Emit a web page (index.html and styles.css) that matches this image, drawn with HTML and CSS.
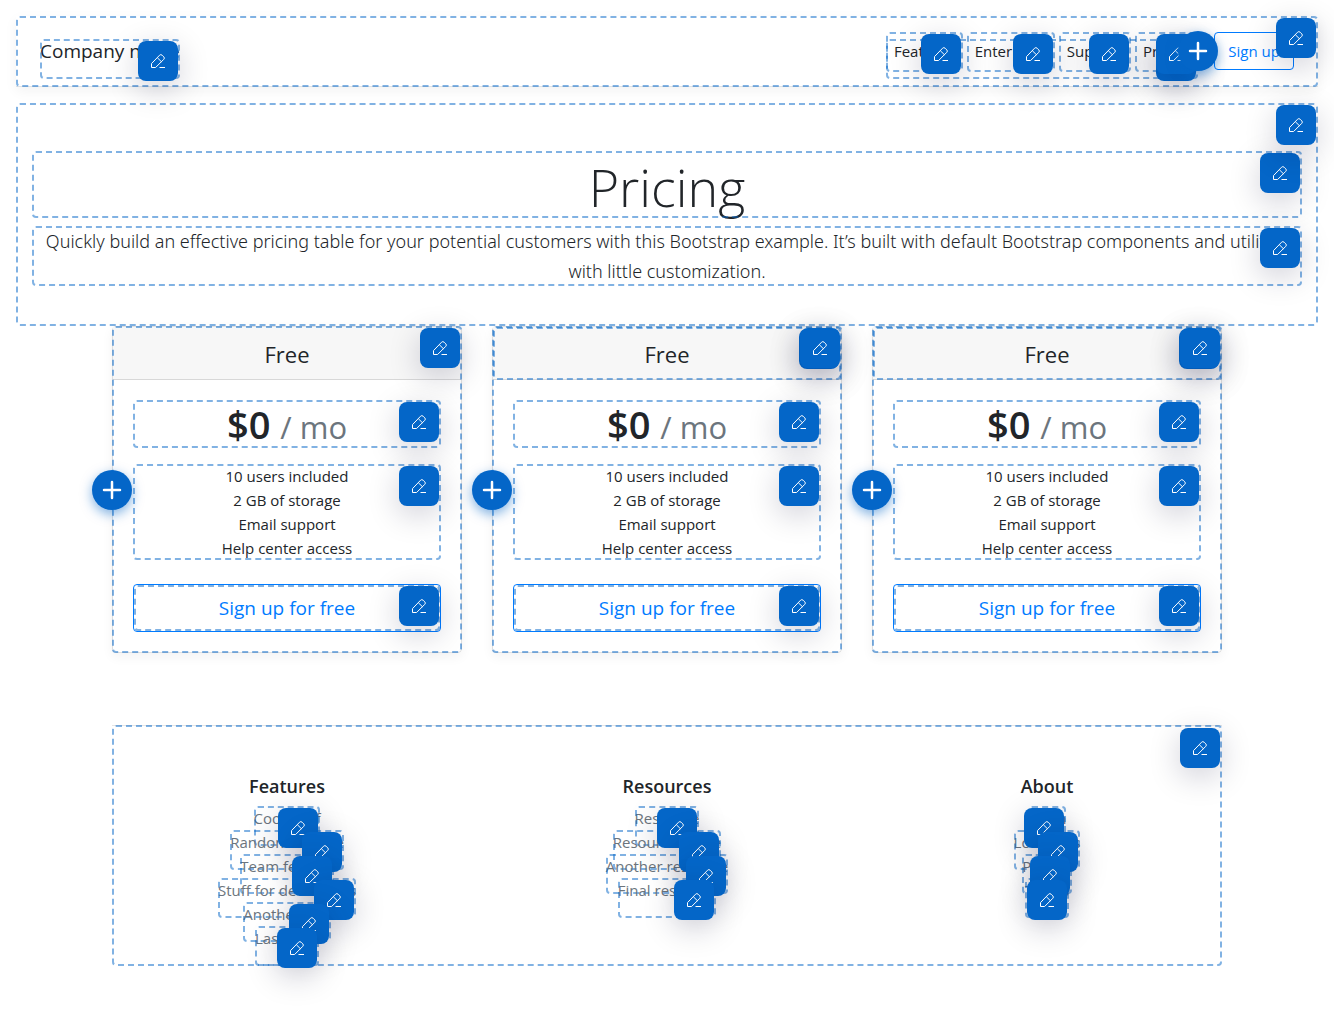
FILE: index.html
```html
<!DOCTYPE html>
<html lang="en">
<head>
<meta charset="utf-8">
<meta name="viewport" content="width=device-width, initial-scale=1">
<title>Pricing</title>
<link rel="stylesheet" href="styles.css">
</head>
<body>
<svg class="sprite" aria-hidden="true">
  <symbol id="edit" viewBox="0 0 16 16">
    <path d="M1.5 14.5V10.6L9.6 2.2Q10.8 1 12.1 2.2L13.8 3.9Q15 5.1 13.8 6.3L5.6 14.5ZM7.3 4.7L11.5 8.8M9.5 14.5H15"/>
  </symbol>
  <symbol id="plus" viewBox="0 0 20 20">
    <path d="M10 2V18M2 10H18"/>
  </symbol>
</svg>

<header class="topbar editable">
  <h5 class="brand editable">Company name<button class="edit" aria-label="Edit company name"><svg><use href="#edit"/></svg></button></h5>
  <nav class="nav editable">
    <span class="nav-item editable"><a href="#">Features</a><button class="edit" aria-label="Edit link"><svg><use href="#edit"/></svg></button></span>
    <span class="nav-item editable"><a href="#">Enterprise</a><button class="edit" aria-label="Edit link"><svg><use href="#edit"/></svg></button></span>
    <span class="nav-item editable"><a href="#">Support</a><button class="edit" aria-label="Edit link"><svg><use href="#edit"/></svg></button></span>
    <span class="nav-item editable"><a href="#">Pricing</a><button class="edit" aria-label="Edit link"><svg><use href="#edit"/></svg></button></span>
    <button class="edit edit-under" aria-label="Edit navigation"><svg><use href="#edit"/></svg></button>
    <button class="add add-end" aria-label="Add link"><svg><use href="#plus"/></svg></button>
  </nav>
  <a class="btn" href="#">Sign up</a>
  <button class="edit" aria-label="Edit header"><svg><use href="#edit"/></svg></button>
</header>

<section class="hero editable">
  <h1 class="editable">Pricing<button class="edit" aria-label="Edit title"><svg><use href="#edit"/></svg></button></h1>
  <p class="lead editable">Quickly build an effective pricing table for your potential customers with this Bootstrap example. It’s built with default Bootstrap components and utilities<br> with little customization.<button class="edit" aria-label="Edit text"><svg><use href="#edit"/></svg></button></p>
  <button class="edit" aria-label="Edit section"><svg><use href="#edit"/></svg></button>
</section>

<main class="container">
  <div class="cards">
    <article class="card">
      <div class="card-header"><h4>Free</h4></div>
      <div class="card-body">
        <h2 class="price editable">$0 <small>/ mo</small><button class="edit" aria-label="Edit price"><svg><use href="#edit"/></svg></button></h2>
        <div class="perks editable">
          <ul><li>10 users included</li><li>2 GB of storage</li><li>Email support</li><li>Help center access</li></ul>
          <button class="edit" aria-label="Edit list"><svg><use href="#edit"/></svg></button>
        </div>
        <div class="action"><button class="btn btn-lg">Sign up for free</button><button class="edit" aria-label="Edit button"><svg><use href="#edit"/></svg></button></div>
      </div>
      <div class="card-tools editable"><button class="edit" aria-label="Edit card"><svg><use href="#edit"/></svg></button><button class="add add-start" aria-label="Add card"><svg><use href="#plus"/></svg></button></div>
    </article>
    <article class="card">
      <div class="card-header editable"><h4>Free</h4><button class="edit" aria-label="Edit card title"><svg><use href="#edit"/></svg></button></div>
      <div class="card-body">
        <h2 class="price editable">$0 <small>/ mo</small><button class="edit" aria-label="Edit price"><svg><use href="#edit"/></svg></button></h2>
        <div class="perks editable">
          <ul><li>10 users included</li><li>2 GB of storage</li><li>Email support</li><li>Help center access</li></ul>
          <button class="edit" aria-label="Edit list"><svg><use href="#edit"/></svg></button>
        </div>
        <div class="action"><button class="btn btn-lg">Sign up for free</button><button class="edit" aria-label="Edit button"><svg><use href="#edit"/></svg></button></div>
      </div>
      <div class="card-tools editable"><button class="edit" aria-label="Edit card"><svg><use href="#edit"/></svg></button><button class="add add-start" aria-label="Add card"><svg><use href="#plus"/></svg></button></div>
    </article>
    <article class="card">
      <div class="card-header editable"><h4>Free</h4><button class="edit" aria-label="Edit card title"><svg><use href="#edit"/></svg></button></div>
      <div class="card-body">
        <h2 class="price editable">$0 <small>/ mo</small><button class="edit" aria-label="Edit price"><svg><use href="#edit"/></svg></button></h2>
        <div class="perks editable">
          <ul><li>10 users included</li><li>2 GB of storage</li><li>Email support</li><li>Help center access</li></ul>
          <button class="edit" aria-label="Edit list"><svg><use href="#edit"/></svg></button>
        </div>
        <div class="action"><button class="btn btn-lg">Sign up for free</button><button class="edit" aria-label="Edit button"><svg><use href="#edit"/></svg></button></div>
      </div>
      <div class="card-tools editable"><button class="edit" aria-label="Edit card"><svg><use href="#edit"/></svg></button><button class="add add-start" aria-label="Add card"><svg><use href="#plus"/></svg></button></div>
    </article>
  </div>

  <footer class="footer editable">
    <div>
      <h5>Features</h5>
      <ul class="links">
        <li class="editable"><a href="#">Cool stuff</a><button class="edit" aria-label="Edit link"><svg><use href="#edit"/></svg></button></li>
        <li class="editable"><a href="#">Random feature</a><button class="edit" aria-label="Edit link"><svg><use href="#edit"/></svg></button></li>
        <li class="editable"><a href="#">Team feature</a><button class="edit" aria-label="Edit link"><svg><use href="#edit"/></svg></button></li>
        <li class="editable"><a href="#">Stuff for developers</a><button class="edit" aria-label="Edit link"><svg><use href="#edit"/></svg></button></li>
        <li class="editable"><a href="#">Another one</a><button class="edit" aria-label="Edit link"><svg><use href="#edit"/></svg></button></li>
        <li class="editable"><a href="#">Last time</a><button class="edit" aria-label="Edit link"><svg><use href="#edit"/></svg></button></li>
      </ul>
    </div>
    <div>
      <h5>Resources</h5>
      <ul class="links">
        <li class="editable"><a href="#">Resource</a><button class="edit" aria-label="Edit link"><svg><use href="#edit"/></svg></button></li>
        <li class="editable"><a href="#">Resource name</a><button class="edit" aria-label="Edit link"><svg><use href="#edit"/></svg></button></li>
        <li class="editable"><a href="#">Another resource</a><button class="edit" aria-label="Edit link"><svg><use href="#edit"/></svg></button></li>
        <li class="editable"><a href="#">Final resource</a><button class="edit" aria-label="Edit link"><svg><use href="#edit"/></svg></button></li>
      </ul>
    </div>
    <div>
      <h5>About</h5>
      <ul class="links">
        <li class="editable"><a href="#">Team</a><button class="edit" aria-label="Edit link"><svg><use href="#edit"/></svg></button></li>
        <li class="editable"><a href="#">Locations</a><button class="edit" aria-label="Edit link"><svg><use href="#edit"/></svg></button></li>
        <li class="editable"><a href="#">Privacy</a><button class="edit" aria-label="Edit link"><svg><use href="#edit"/></svg></button></li>
        <li class="editable"><a href="#">Terms</a><button class="edit" aria-label="Edit link"><svg><use href="#edit"/></svg></button></li>
      </ul>
    </div>
    <button class="edit" aria-label="Edit footer"><svg><use href="#edit"/></svg></button>
  </footer>
</main>
</body>
</html>
```
FILE: styles.css
```css
*, *::before, *::after { box-sizing: border-box; }

body {
  margin: 0;
  padding: 16px 16px 64px;
  font: 400 15px/24px "Open Sans", "Noto Sans", sans-serif;
  color: #212529;
  background: #fff;
}

h1, h2, h4, h5, p, ul { margin: 0; padding: 0; font-weight: 400; }
ul { list-style: none; }
a { text-decoration: none; color: inherit; }
button { font: inherit; cursor: pointer; }
.sprite { position: absolute; width: 0; height: 0; }

/* Editing overlay: dashed frame, edit button, add button */
.editable { position: relative; }
.editable::after, .action::after {
  content: "";
  position: absolute;
  top: 0;
  left: 0;
  width: 100%;
  height: 100%;
  min-height: 40px;
  border: 2px dashed rgba(4, 102, 200, .5);
  border-radius: 4px;
  pointer-events: none;
}

.edit, .add {
  position: absolute;
  z-index: 2;
  display: flex;
  align-items: center;
  justify-content: center;
  width: 40px;
  height: 40px;
  padding: 0;
  border: 0;
  background: #0466c8;
}
.edit {
  top: 2px;
  right: 2px;
  border-radius: 8px;
  box-shadow: 0 8px 32px rgba(0, 0, 50, .2);
}
.edit svg, .add svg { fill: none; stroke: #fff; }
.edit svg { width: 16px; height: 16px; }
.edit-under { z-index: 1; }
.add {
  z-index: 3;
  border-radius: 50%;
  box-shadow: 0 4px 12px rgba(4, 102, 200, .5);
}
.add svg { width: 20px; height: 20px; stroke-width: 2.5; stroke-linecap: round; }
.add-end { top: -8px; right: -20px; }
.add-start { top: 50%; left: -20px; margin-top: -20px; }

.btn {
  padding: 6px 13px;
  border: 1px solid #007bff;
  border-radius: 4px;
  color: #007bff;
  background: transparent;
}

.topbar {
  display: flex;
  align-items: center;
  margin-bottom: 16px;
  padding: 16px 24px;
  border-bottom: 1px solid #dee2e6;
  box-shadow: 0 4px 12px rgba(0, 0, 0, .05);
}
.topbar.editable::after, .card-header.editable::after { height: calc(100% + 1px); }
.brand { margin-right: auto; font-size: 19px; }
.nav { display: flex; gap: 4px; height: 24px; margin-right: 16px; }
.nav-item { margin-top: -7px; padding: 7px 8px; height: 40px; }

.hero { padding: 48px 16px 40px; text-align: center; }
.hero h1 { margin-bottom: 8px; padding-top: 4px; font-size: 52px; line-height: 63px; font-weight: 300; }
.lead { font-family: "Noto Sans", "Open Sans", sans-serif; font-size: 18px; line-height: 30px; font-weight: 300; }

.container { max-width: 1110px; margin: 0 auto; }
.cards { display: grid; grid-template-columns: repeat(3, 1fr); gap: 30px; text-align: center; }
.card {
  position: relative;
  border: 1px solid rgba(0, 0, 0, .125);
  border-radius: 4px;
  box-shadow: 0 4px 12px rgba(0, 0, 0, .05);
}
.card-header {
  padding: 13px 20px 11px;
  border-bottom: 1px solid rgba(0, 0, 0, .125);
  background: #f7f7f7;
}
.card-header h4 { font-size: 22px; line-height: 28px; }
.card-body { padding: 20px; }
.card-tools.editable { position: absolute; inset: -1px; pointer-events: none; }
.card-tools button { pointer-events: auto; }
.price { margin-bottom: 16px; font-size: 38px; line-height: 48px; font-weight: 600; }
.price small { font-size: 31px; line-height: 30px; font-weight: 400; color: #6c757d; }
.perks { margin-bottom: 24px; }
.action { position: relative; }
.action::after { top: 1px; left: 1px; width: calc(100% - 2px); height: calc(100% - 2px); }
.btn-lg { display: block; width: 100%; padding: 8px 16px; font-size: 19px; line-height: 30px; }

.footer {
  display: grid;
  grid-template-columns: repeat(3, 1fr);
  gap: 30px;
  margin-top: 72px;
  padding: 48px 0 16px;
  border-top: 1px solid #e5e5e5;
  text-align: center;
}
.footer.editable::after { top: -1px; height: calc(100% + 1px); }
.footer h5 { margin-bottom: 8px; font-size: 18px; font-weight: 600; }
.links { display: flex; flex-direction: column; align-items: center; color: #6c757d; }
```
